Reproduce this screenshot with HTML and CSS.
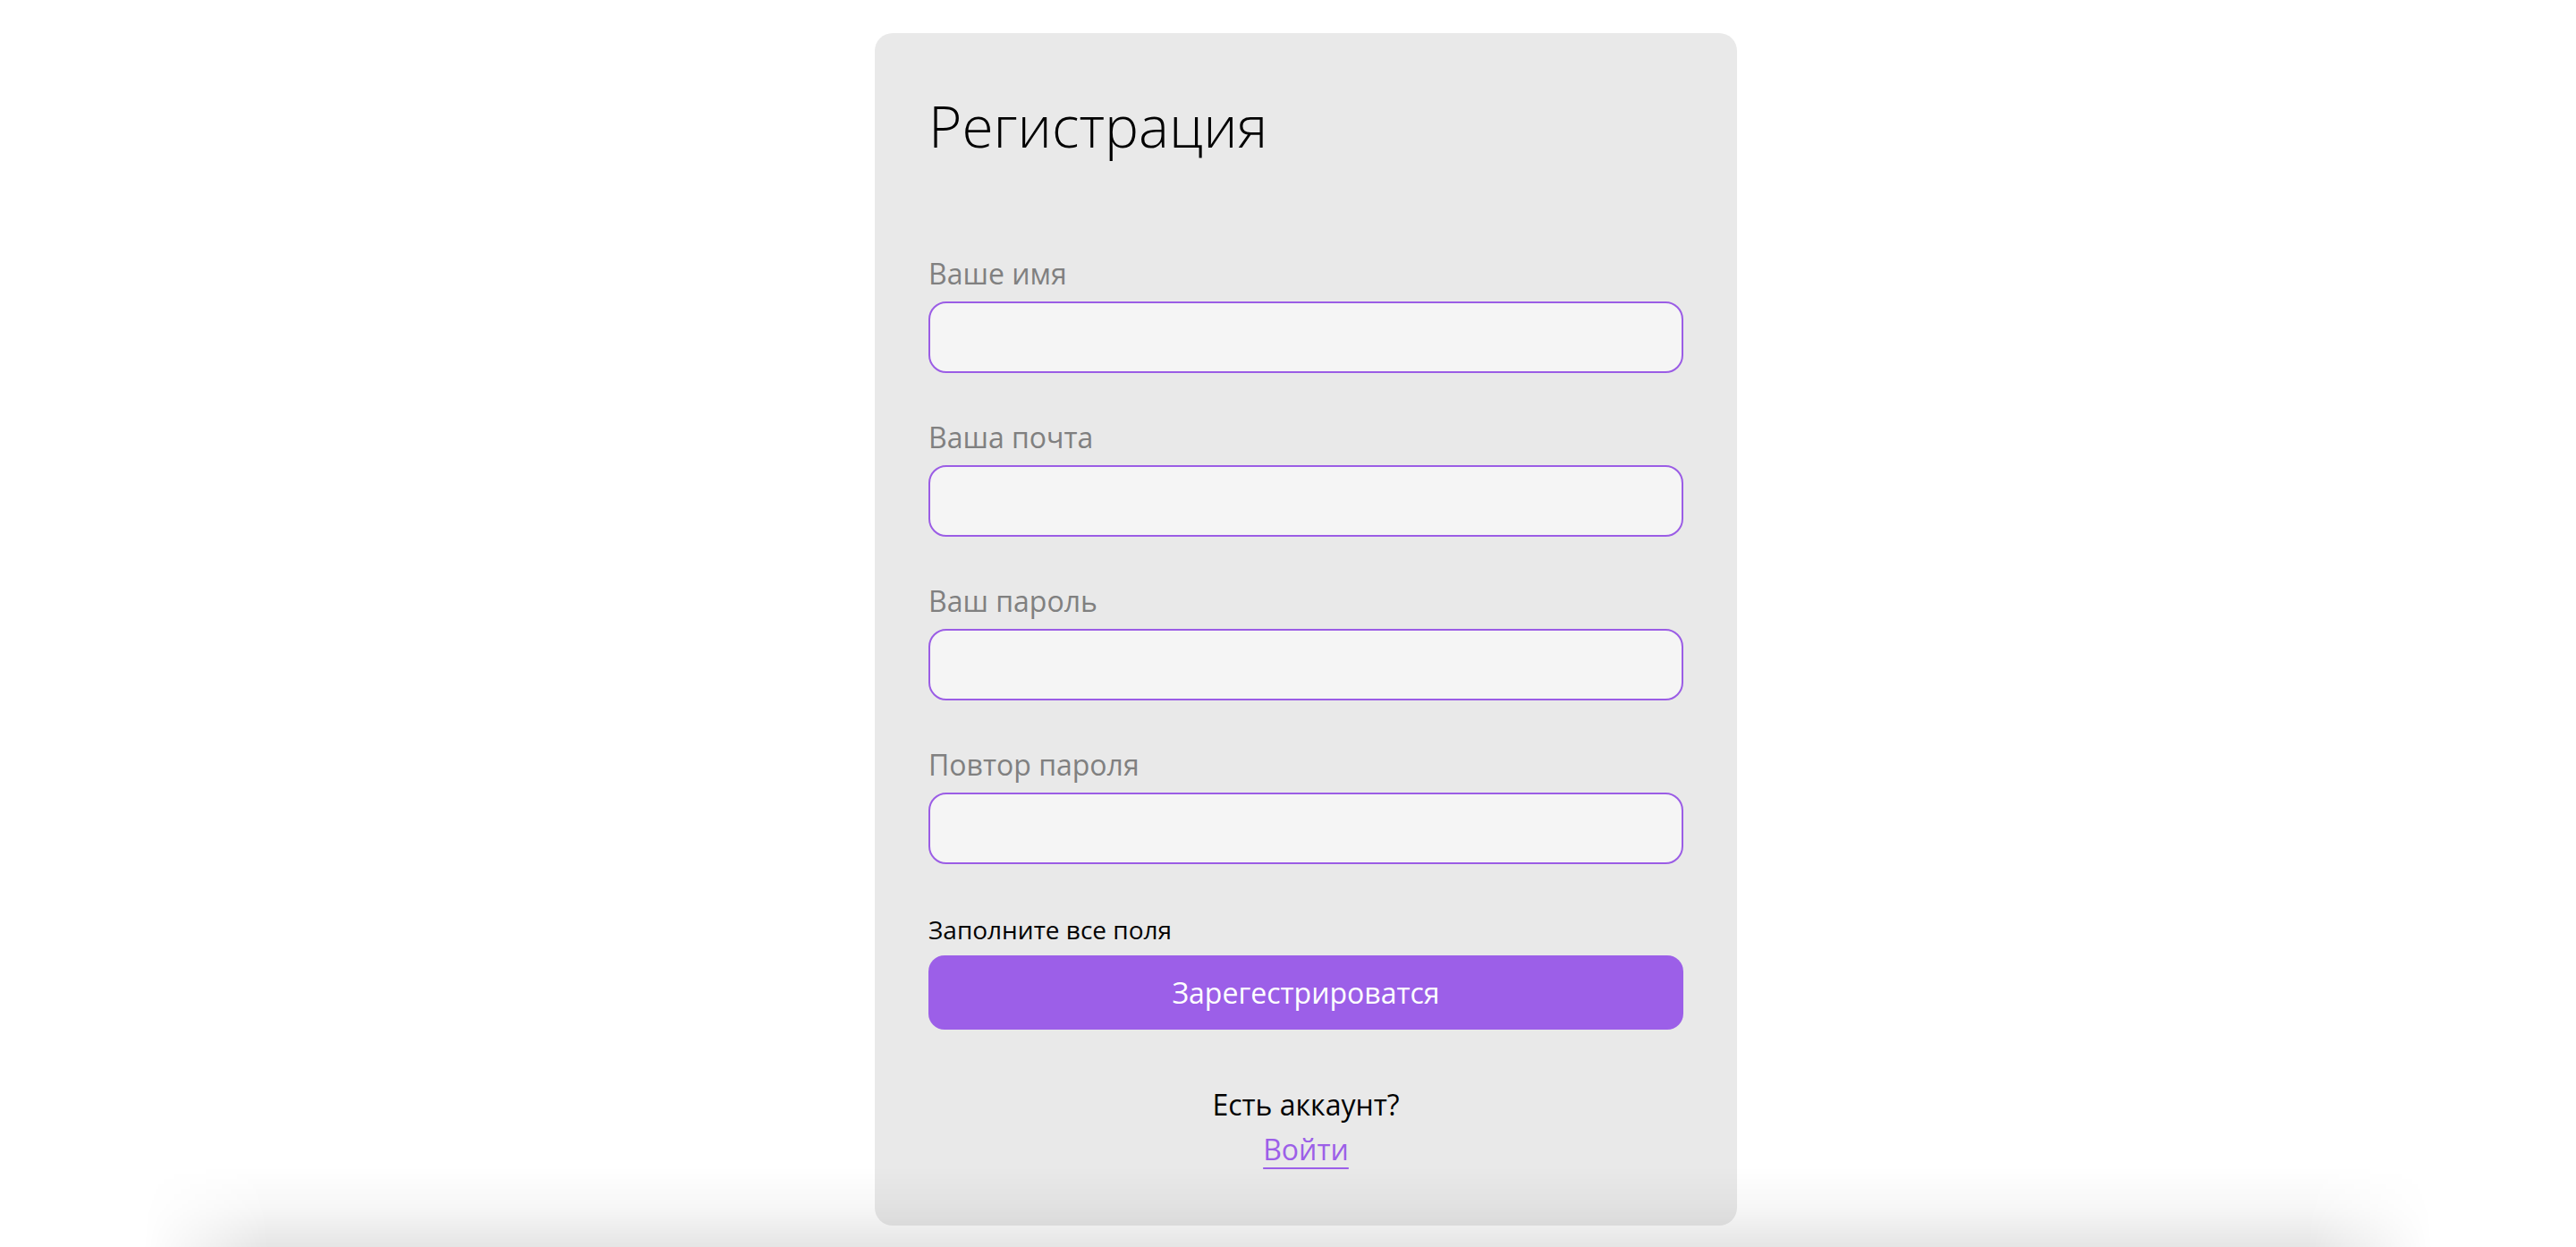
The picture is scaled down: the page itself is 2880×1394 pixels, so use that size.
FILE: index.html
```html
<!DOCTYPE html>
<html lang="ru">
<head>
<meta charset="utf-8">
<title>Регистрация</title>
<link rel="stylesheet" href="styles.css">
</head>
<body>
<main class="page">
  <form class="card">
    <h1 class="title">Регистрация</h1>
    <div class="fields">
      <label class="field">
        <span class="label">Ваше имя</span>
        <input class="input" type="text">
      </label>
      <label class="field">
        <span class="label">Ваша почта</span>
        <input class="input" type="email">
      </label>
      <label class="field">
        <span class="label">Ваш пароль</span>
        <input class="input" type="password">
      </label>
      <label class="field">
        <span class="label">Повтор пароля</span>
        <input class="input" type="password">
      </label>
    </div>
    <p class="hint">Заполните все поля</p>
    <button class="submit" type="button">Зарегестрироватся</button>
    <div class="login">
      <span class="login-q">Есть аккаунт?</span>
      <a class="login-link" href="#">Войти</a>
    </div>
  </form>
</main>
<div class="bottom-shade"></div>
</body>
</html>
```

FILE: styles.css
```css
html, body {
  margin: 0;
  padding: 0;
  background: #ffffff;
}
body {
  font-family: "Open Sans", "Noto Sans", sans-serif;
  height: 1394px;
  overflow: hidden;
}
.page {
  display: flex;
  justify-content: center;
  padding: 37px 0 0 40px;
}
.card {
  width: 964px;
  box-sizing: border-box;
  background: #e9e9e9;
  border-radius: 20px;
  padding: 59px 60px 63px;
  display: flex;
  flex-direction: column;
}
.title {
  margin: 0;
  font-weight: 300;
  font-size: 64px;
  line-height: 90px;
  color: #000;
}
.fields {
  margin-top: 98px;
  display: flex;
  flex-direction: column;
  gap: 50px;
}
.field {
  display: flex;
  flex-direction: column;
  gap: 9px;
}
.label {
  font-size: 32px;
  line-height: 44px;
  color: #808080;
}
.input {
  box-sizing: border-box;
  height: 80px;
  width: 100%;
  border: 2px solid #9b5de5;
  border-radius: 20px;
  background: #f5f5f5;
  outline: none;
  font: inherit;
}
.hint {
  margin: 54px 0 0;
  font-size: 28px;
  line-height: 38px;
  color: #000;
}
.submit {
  margin-top: 10px;
  height: 83px;
  border: none;
  border-radius: 18px;
  background: #9c5fe8;
  color: #fff;
  font-family: inherit;
  font-size: 32px;
}
.login {
  margin-top: 62px;
  display: flex;
  flex-direction: column;
  align-items: center;
  gap: 6px;
}
.login-q {
  font-size: 32px;
  line-height: 44px;
  color: #000;
}
.login-link {
  font-size: 32px;
  line-height: 44px;
  color: #9c5fe8;
  text-decoration: underline;
  text-decoration-thickness: 2px;
  text-underline-offset: 8px;
}
.bottom-shade {
  position: fixed;
  left: 160px;
  right: 160px;
  bottom: 0;
  height: 90px;
  pointer-events: none;
  background: linear-gradient(to bottom, rgba(0,0,0,0) 0%, rgba(0,0,0,0.03) 50%, rgba(0,0,0,0.1) 100%);
  -webkit-mask-image: linear-gradient(to right, transparent 0, #000 140px, #000 calc(100% - 140px), transparent 100%);
  mask-image: linear-gradient(to right, transparent 0, #000 140px, #000 calc(100% - 140px), transparent 100%);
}
```
